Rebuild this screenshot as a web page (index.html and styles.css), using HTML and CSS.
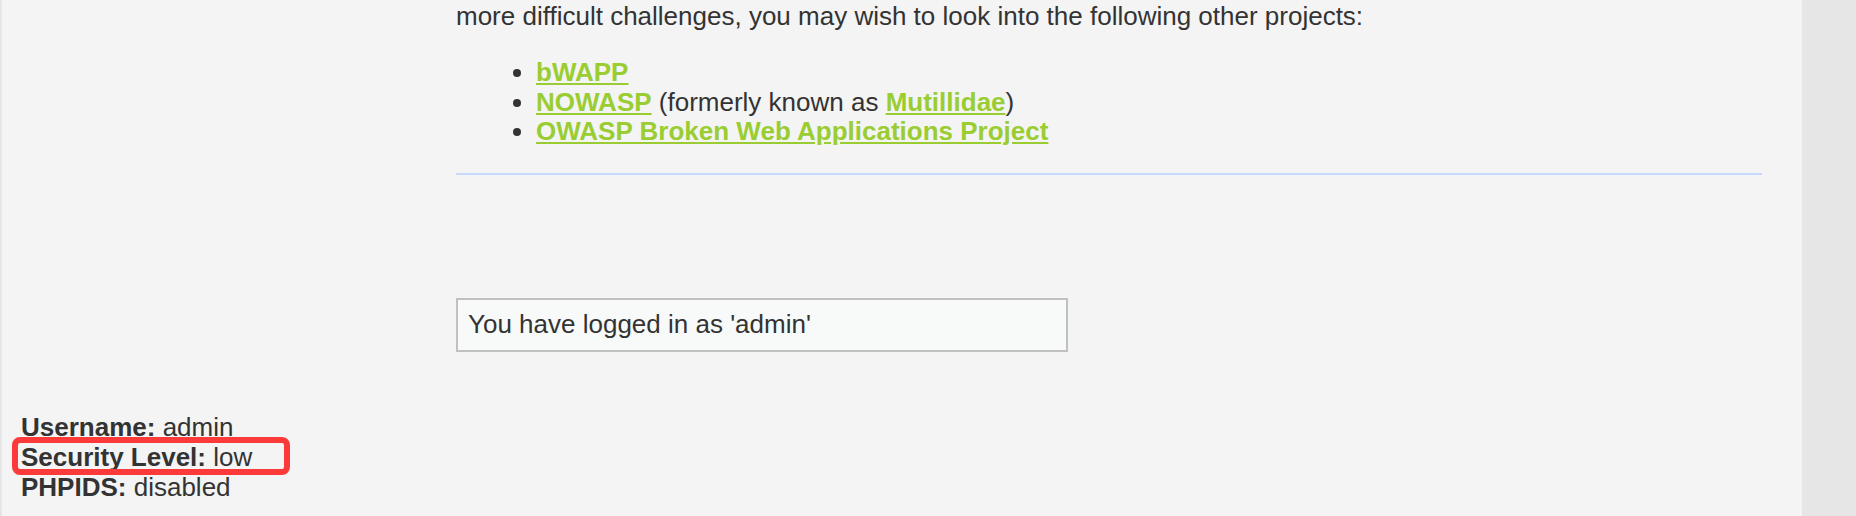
FILE: index.html
```
<!DOCTYPE html>
<html>
<head>
<meta charset="utf-8">
<title>DVWA</title>
<link rel="stylesheet" href="styles.css">
</head>
<body>
<div class="container">
  <div class="layout">
    <div class="sidebar"></div>
    <div class="main">
      <p class="intro">more difficult challenges, you may wish to look into the following other projects:</p>
      <ul class="projects">
        <li><a href="#">bWAPP</a></li>
        <li><a href="#">NOWASP</a> (formerly known as <a href="#">Mutillidae</a>)</li>
        <li><a href="#">OWASP Broken Web Applications Project</a></li>
      </ul>
      <hr class="rule">
      <div class="message">You have logged in as 'admin'</div>
    </div>
  </div>
  <div class="sysinfo">
    <div><b>Username:</b> admin</div>
    <div><b>Security Level:</b> low</div>
    <div><b>PHPIDS:</b> disabled</div>
    <div class="highlight"></div>
  </div>
</div>
</body>
</html>
```
FILE: styles.css
```
html, body {
  margin: 0;
  padding: 0;
}
body {
  background: #e6e6e6;
  font-family: "Liberation Sans", Arial, sans-serif;
  font-size: 26px;
  line-height: 29.8px;
  color: #333;
  overflow: hidden;
}
.container {
  width: 1800px;
  min-height: 516px;
  background: #f4f4f4;
  border-left: 2px solid #e6e6e6;
}
.layout {
  display: flex;
}
.sidebar {
  width: 454px;
  flex: none;
}
.main {
  width: 1306px;
  padding-top: 2px;
}
.intro {
  margin: 0 0 26px 0;
}
.projects {
  margin: 0 0 26px 0;
  padding-left: 80px;
}
.projects a {
  color: #9acd32;
  font-weight: bold;
}
.rule {
  border: 0;
  height: 2px;
  margin: 0;
  background: #c6d9fc;
}
.message {
  box-sizing: border-box;
  width: 612px;
  margin-top: 123px;
  padding: 10px;
  border: 2px solid #c0c0c0;
  background: #f8faf9;
}
.sysinfo {
  position: relative;
  margin-top: 61px;
  padding-left: 19px;
}
.highlight {
  position: absolute;
  left: 10px;
  top: 24px;
  width: 266px;
  height: 26px;
  border: 6px solid #fd3a3a;
  border-radius: 8px;
}
```
